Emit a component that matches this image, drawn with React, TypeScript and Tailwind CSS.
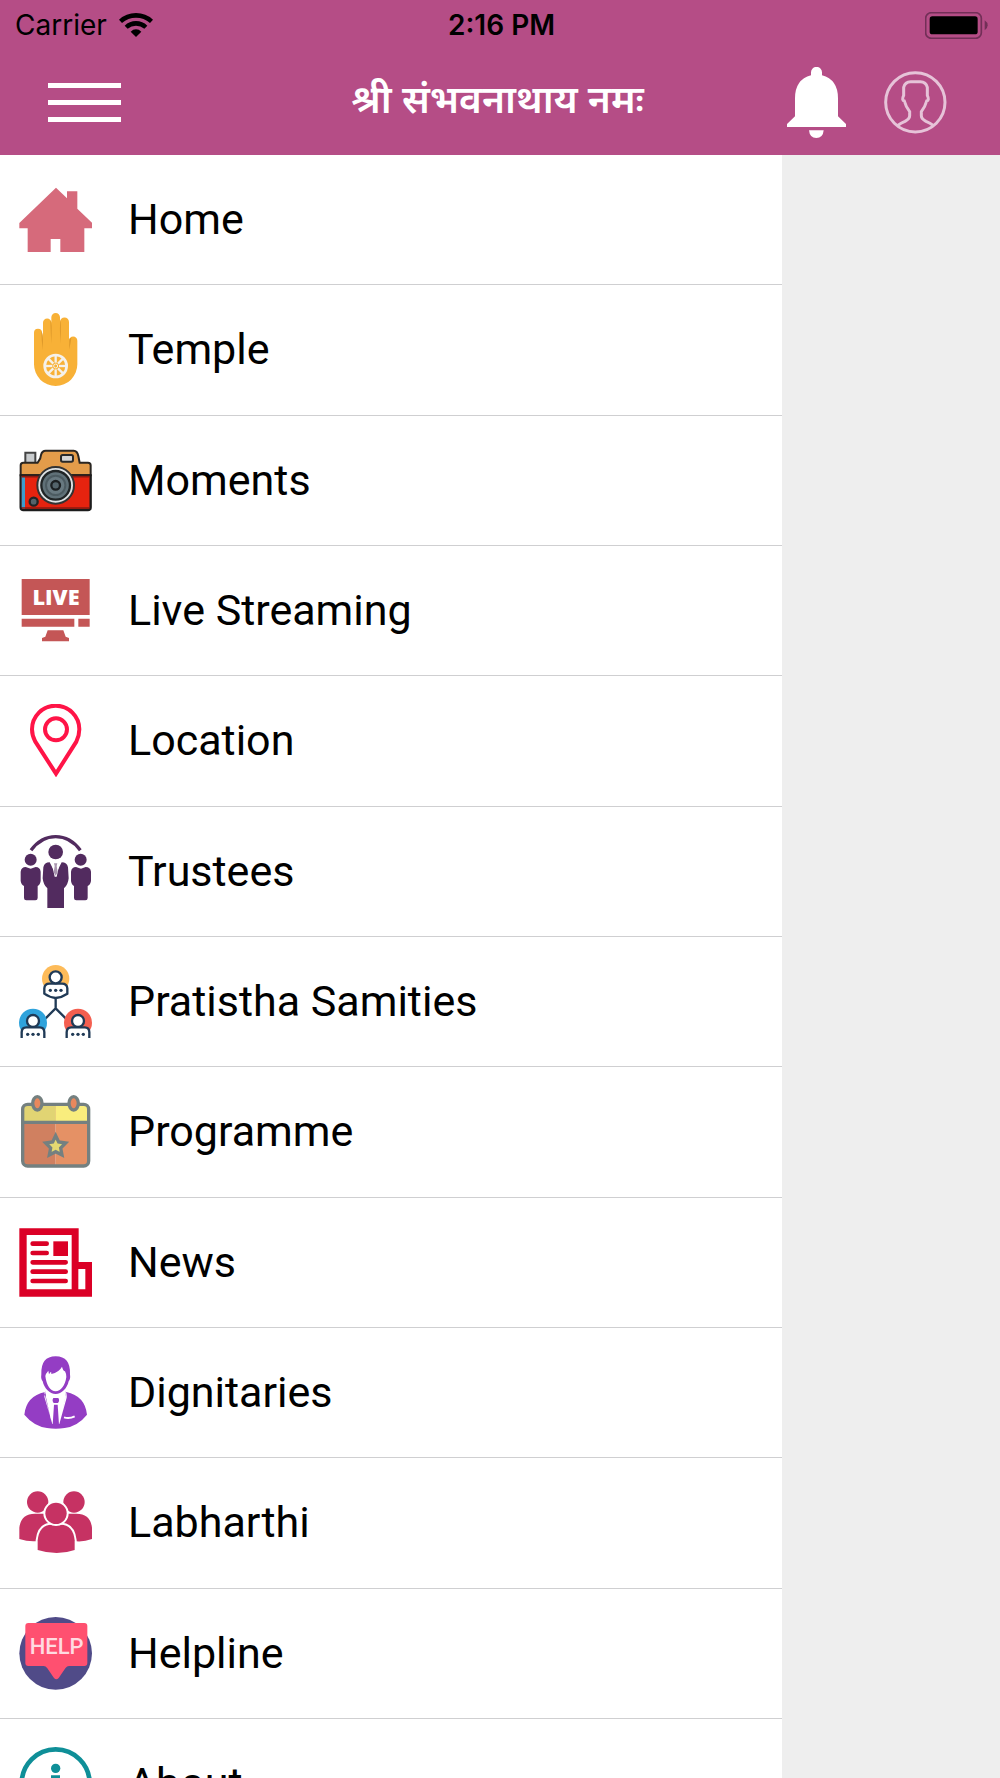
import type { ReactNode } from "react";

interface MenuItem {
  title: string;
  href: string;
  icon: ReactNode;
}

const NAVY = "#203a56";

function Spokes() {
  return (
    <g stroke="#f5f1ea" strokeWidth="7">
      {[0, 45, 90, 135, 180, 225, 270, 315].map((angle) => (
        <line
          key={angle}
          x1="110"
          y1="149"
          x2="110"
          y2="128"
          transform={`rotate(${angle} 110 159)`}
        />
      ))}
    </g>
  );
}

function Member({ x, color }: { x: number; color: string }) {
  return (
    <g transform={`translate(${x} 0)`}>
      <circle cy="173" r="42" fill={color} />
      <circle cy="168" r="18" fill="#fff" stroke={NAVY} strokeWidth="7" />
      <path
        d="M-34 222V202Q-34 187-20 187H20Q34 187 34 202V222"
        fill="#fff"
        stroke={NAVY}
        strokeWidth="7"
      />
      <g fill={NAVY}>
        <circle cx="-16" cy="208" r="5" />
        <circle cy="208" r="5" />
        <circle cx="16" cy="208" r="5" />
      </g>
    </g>
  );
}

const menuItems: MenuItem[] = [
  {
    title: "Home",
    href: "#home",
    icon: (
      <path
        d="M111 14L144 46V25H175V77L219 119V136H196V207H124V168H95V207H26V136H1V120Z"
        fill="#d66a7b"
      />
    ),
  },
  {
    title: "Temple",
    href: "#temple",
    icon: (
      <>
        <path
          d="M45 154V59a12 12 0 0 1 24 0L72 80V29a12.500 12.500 0 0 1 25 0V13a13 13 0 0 1 26 0V27a13.500 13.500 0 0 1 27 0V83a12.500 12.500 0 0 1 25 0V154a65 65 0 0 1-130 0Z"
          fill="#f8b137"
        />
        <path
          d="M67 54Q72 60 72 84L71 112Q68 86 67 54ZM94 22Q99 30 98 60L97 92Q95 60 94 22ZM126 20Q122 30 123 60L125 92Q126 60 126 20ZM151 77L150 110Q156 88 157 74Z"
          fill="#df9a2b"
        />
        <circle cx="110" cy="159" r="33" fill="none" stroke="#f5f1ea" strokeWidth="8" />
        <Spokes />
        <circle cx="110" cy="159" r="6" fill="none" stroke="#f5f1ea" strokeWidth="3" />
      </>
    ),
  },
  {
    title: "Moments",
    href: "#moments",
    icon: (
      <>
        <path d="M19 54V26H49V54" fill="#c9ccce" stroke="#444" strokeWidth="6" />
        <path
          d="M5 94V64Q5 56 13 56H56Q66 44 66 33Q69 20 80 20H164Q175 20 178 36L182 56H207Q215 56 215 64V94Z"
          fill="#e39c4a"
          stroke="#2a2622"
          strokeWidth="6"
        />
        <path
          d="M5 94H215V190Q215 198 207 198H13Q5 198 5 190Z"
          fill="#e6230f"
          stroke="#1c1c1c"
          strokeWidth="7"
        />
        <path d="M8 97H18V195H12Q8 194 8 188Z" fill="#3d9ccc" />
        <path d="M8 98H212M8 192H212" stroke="#8c1a10" strokeWidth="5" />
        <rect x="126" y="33" width="36" height="20" rx="5" fill="#d5d5d5" stroke="#292929" strokeWidth="6" />
        <circle cx="110" cy="124" r="55" fill="#dfe3e4" stroke="#333" strokeWidth="6" />
        <circle cx="110" cy="124" r="43" fill="#607178" stroke="#202526" strokeWidth="7" />
        <circle cx="110" cy="124" r="29" fill="#687980" stroke="#4c5b61" strokeWidth="6" />
        <circle cx="110" cy="124" r="13" fill="#53646b" stroke="#1b2022" strokeWidth="7" />
        <circle cx="44" cy="173" r="12" fill="#54636a" stroke="#1f2426" strokeWidth="7" />
      </>
    ),
  },
  {
    title: "Live Streaming",
    href: "#live",
    icon: (
      <>
        <path
          d="M8 15H212V123H8ZM8 134H166V158H8ZM178 134H212V158H178ZM86 169H133L140 188L150 192V202H69V192L79 188Z"
          fill="#c45656"
        />
        <text
          x="111"
          y="93"
          textAnchor="middle"
          fill="#fff"
          className="font-['Open_Sans'] text-[65px] font-extrabold"
        >
          LIVE
        </text>
      </>
    ),
  },
  {
    title: "Location",
    href: "#location",
    icon: (
      <g fill="none" stroke="#ff1447" strokeWidth="12">
        <path d="M111 209L49 113Q39 95 39 76A71 71 0 0 1 181 76Q181 95 172 113Z" />
        <circle cx="111" cy="76" r="33" />
      </g>
    ),
  },
  {
    title: "Trustees",
    href: "#trustees",
    icon: (
      <>
        <path d="M36 46Q66 5 110 5T184 46" fill="none" stroke="#522b5f" strokeWidth="10" />
        <g fill="#522b5f">
          <circle cx="110" cy="51" r="22" />
          <circle cx="35" cy="74" r="18" />
          <circle cx="185" cy="74" r="18" />
          <path d="M20 96L35 101L50 96Q63 96 65 110V138Q63 150 56 153V189Q56 196 49 196H22Q15 196 15 189V153Q7 150 5 138V110Q7 96 20 96Z" />
          <path d="M171 96L186 101L200 96Q214 96 216 110V138Q214 150 206 153V189Q206 196 199 196H172Q165 196 165 189V153Q158 150 156 138V110Q158 96 171 96Z" />
          <path d="M92 82L110 118L128 82Q144 82 147 97L149 130Q147 150 135 160V219H85V160Q73 150 71 130L73 97Q76 82 92 82Z" />
        </g>
        <path d="M98 84H122L113 125H107Z" fill="#fff" />
        <path d="M105 85H115L113 93L116 112L110 122L104 112L107 93Z" fill="#a895ae" />
      </>
    ),
  },
  {
    title: "Pratistha Samities",
    href: "#samities",
    icon: (
      <>
        <circle cx="110" cy="41" r="41" fill="#fdbb59" />
        <path d="M110 98V130L80 160M110 130L140 160" fill="none" stroke={NAVY} strokeWidth="7" />
        <path
          d="M76 86V70Q77 56 91 56H129Q144 56 145 70V86Q129 97 110 99Q91 97 76 86Z"
          fill="#fff"
          stroke={NAVY}
          strokeWidth="7"
        />
        <circle cx="110" cy="37" r="18" fill="#fff" stroke={NAVY} strokeWidth="7" />
        <g fill={NAVY}>
          <circle cx="94" cy="76" r="5" />
          <circle cx="110" cy="76" r="5" />
          <circle cx="126" cy="76" r="5" />
        </g>
        <Member x={42} color="#2fa3dc" />
        <Member x={177} color="#f45f50" />
      </>
    ),
  },
  {
    title: "Programme",
    href: "#programme",
    icon: (
      <>
        <path d="M110 28H24Q12 28 12 42V198Q12 212 26 212H110Z" fill="#d08060" />
        <path d="M110 28H195Q208 28 208 42V198Q208 212 194 212H110Z" fill="#e59165" />
        <path d="M110 28H24Q12 28 12 42V82H110Z" fill="#e1d473" />
        <path d="M110 28H195Q208 28 208 42V82H110Z" fill="#f9ed7d" />
        <g stroke="#748080" strokeWidth="10">
          <rect x="11" y="28" width="198" height="185" rx="15" fill="none" />
          <path d="M12 82H208" />
          <ellipse cx="55" cy="25" rx="14" ry="20" fill="#e8885d" />
          <ellipse cx="164" cy="25" rx="14" ry="20" fill="#e8885d" />
          <path
            d="M110 122L119 141L140 144L125 159L129 180L110 170L91 180L95 159L80 144L101 141Z"
            fill="#e4d971"
          />
        </g>
      </>
    ),
  },
  {
    title: "News",
    href: "#news",
    icon: (
      <>
        <path
          d="M1 7H179V108H219V212H1ZM23 27V190H158V27ZM178 129V190H199V129Z"
          fill="#db0026"
          fillRule="evenodd"
        />
        <path d="M103 46H147V90H103Z" fill="#db0026" />
        <path
          d="M41 53H83M41 81H83M41 109H140M41 137H140M41 165H140"
          stroke="#db0026"
          strokeWidth="14"
          strokeLinecap="round"
        />
      </>
    ),
  },
  {
    title: "Dignitaries",
    href: "#dignitaries",
    icon: (
      <>
        <path
          d="M67 55Q65 1 110 1T153 55Q155 70 149 76C144 98 128 114 110 114C92 114 76 98 71 76Q65 70 67 55Z"
          fill="#943dc4"
        />
        <path
          d="M79 60Q80 53 88 44L90 55Q98 42 97 54Q120 49 129 32Q132 44 138 46Q142 53 142 63C139 88 125 106 110 106C95 106 82 88 79 60Z"
          fill="#fff"
        />
        <path
          d="M80 106L81 124L98 202L77 113Q75 109 80 106L78 108Q22 120 16 176Q44 210 84 216Q110 220 137 216Q177 210 204 176Q198 120 142 108L123 202L139 124L140 106Q144 112 143 125L121 204H100L76 122Z"
          fill="#943dc4"
        />
        <path d="M79 108L102 202H119L141 108L126 116H94Z" fill="#fff" />
        <path d="M103 126H118Q123 133 117 141H104Q98 133 103 126ZM105 146H116L120 206H101Z" fill="#943dc4" />
        <path d="M135 184Q151 189 167 181" fill="none" stroke="#fff" strokeWidth="6" />
      </>
    ),
  },
  {
    title: "Labharthi",
    href: "#labharthi",
    icon: (
      <g fill="#c63263">
        <circle cx="56" cy="48" r="32" />
        <circle cx="165" cy="48" r="32" />
        <path d="M1 159V125Q6 83 48 83H172Q214 83 219 125V159Q195 168 172 166H48Q25 167 1 159Z" />
        <path
          d="M56 192V163Q61 116 98 116H125Q162 116 167 163V192Q142 201 113 201T56 192Z"
          stroke="#fff"
          strokeWidth="12"
          paintOrder="stroke"
        />
        <circle cx="111" cy="82" r="32" stroke="#fff" strokeWidth="12" paintOrder="stroke" />
      </g>
    ),
  },
  {
    title: "Helpline",
    href: "#helpline",
    icon: (
      <>
        <circle cx="110" cy="109" r="109" fill="#504b88" />
        <path
          d="M28 18H196Q205 18 205 27V138Q205 147 196 147H150Q144 147 139 154L119 183Q112 191 105 183L85 154Q80 147 74 147H28Q19 147 19 138V27Q19 18 28 18Z"
          fill="#ff5070"
        />
        <text
          x="113"
          y="111"
          textAnchor="middle"
          fill="#ffdbe1"
          className="font-[Roboto,sans-serif] text-[66px] font-medium"
        >
          HELP
        </text>
      </>
    ),
  },
  {
    title: "About",
    href: "#about",
    icon: (
      <>
        <circle cx="110" cy="109" r="102" fill="none" stroke="#0f8f98" strokeWidth="14" />
        <circle cx="110" cy="64" r="14" fill="#0f8f98" />
        <path d="M96 92H116V160" fill="none" stroke="#0f8f98" strokeWidth="14" />
      </>
    ),
  },
];

function StatusBar() {
  return (
    <div className="grid h-[50px] grid-cols-3 items-center pr-3 pl-[15px] font-[Inter,sans-serif] text-[28px] leading-none text-black">
      <div className="flex items-center gap-3">
        <span>Carrier</span>
        <svg viewBox="0 0 102 72" className="h-6 w-[34px]">
          <path d="M51 0Q81 0 102 20L93 30Q75 14 51 14T9 30L0 20Q21 0 51 0Z" />
          <path d="M51 24Q71 24 85 38L76 47Q65 38 51 38T26 47L17 38Q31 24 51 24Z" />
          <path d="M51 49Q60 49 67 56L51 72L35 56Q42 49 51 49Z" />
        </svg>
      </div>
      <span className="text-center font-semibold">2:16 PM</span>
      <svg viewBox="0 0 189 81" className="h-[27px] w-[63px] justify-self-end">
        <rect x="2" y="2" width="167" height="77" rx="17" fill="none" stroke="#722f57" strokeWidth="5" />
        <rect x="14" y="13" width="144" height="54" rx="8" />
        <path d="M179 25Q188 31 188 40T179 55Z" fill="#722f57" />
      </svg>
    </div>
  );
}

function NavBar() {
  return (
    <div className="grid h-[105px] grid-cols-[1fr_auto_1fr] items-center pr-[53px] pl-12">
      <button type="button" aria-label="Menu" className="flex w-[73px] flex-col gap-3">
        <span className="h-[5px] w-full bg-white" />
        <span className="h-[5px] w-full bg-white" />
        <span className="h-[5px] w-full bg-white" />
      </button>
      <h1 className="pt-1 font-['Noto_Sans_Devanagari','Noto_Sans',sans-serif] text-[39px] font-semibold text-white">
        श्री संभवनाथाय नमः
      </h1>
      <div className="flex items-center gap-[38px] justify-self-end">
        <button type="button" aria-label="Notifications">
          <svg viewBox="0 0 177 213" className="h-[71px] w-[59px]" fill="#fff">
            <path d="M72 25V16a16 16 0 0 1 33 0V25Q153 38 153 94V148L177 171V180H0V171L24 148V94Q24 38 72 25Z" />
            <path d="M66 190H110Q108 213 88 213T66 190Z" />
          </svg>
        </button>
        <button type="button" aria-label="Profile">
          <svg
            viewBox="0 0 189 189"
            className="size-[63px]"
            fill="none"
            stroke="#e6c3d8"
            strokeWidth="9"
          >
            <circle cx="94" cy="94" r="89" />
            <path d="M40 164Q51 156 63 151Q77 143 77 134V122Q65 106 61 90Q52 88 59 73V49Q63 32 80 32H109Q126 32 130 49V73Q137 88 128 90Q124 106 112 122V134Q112 143 126 151Q138 156 149 164" />
          </svg>
        </button>
      </div>
    </div>
  );
}

export default function App() {
  return (
    <div className="flex h-screen flex-col overflow-hidden bg-[#eeeeee]">
      <header className="shrink-0 bg-[#b54d86]">
        <StatusBar />
        <NavBar />
      </header>

      {/* Drawer */}
      <nav className="w-[78.2%] flex-1 bg-white">
        <ul>
          {menuItems.map((item) => (
            <li key={item.title}>
              <a
                href={item.href}
                className="flex aspect-[6/1] items-center gap-9 border-b border-[#cfcfd1] pl-[19px] font-[Roboto,sans-serif] text-[43px] leading-none text-black"
              >
                <svg viewBox="0 0 219 219" className="size-[73px] shrink-0">
                  {item.icon}
                </svg>
                <span>{item.title}</span>
              </a>
            </li>
          ))}
        </ul>
      </nav>
    </div>
  );
}
